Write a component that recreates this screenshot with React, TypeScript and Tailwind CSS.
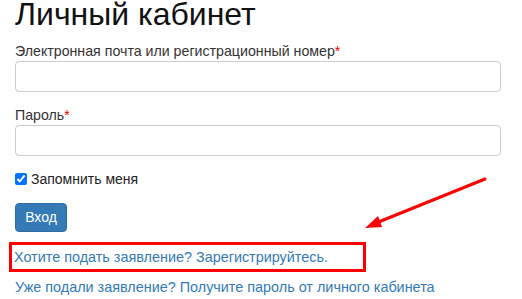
export default function App() {
  return (
    <div className="relative h-[299px] w-[522px] overflow-hidden bg-white px-[15px] font-['Liberation_Sans',Arial,sans-serif] text-[14px] text-[#333]">
      {/* Title */}
      <h1 className="h-[32px] text-[32px] leading-[29px] text-[#111]">Личный кабинет</h1>

      {/* Email */}
      <label className="mt-[9px] block text-[14.2px] leading-[20px]">
        Электронная почта или регистрационный номер<span className="text-[#e00]">*</span>
      </label>
      <input
        type="text"
        className="block h-[31px] w-[486px] rounded-[4px] border border-[#ccc] bg-white px-3 outline-none"
      />

      {/* Password */}
      <label className="mt-[13px] block text-[14.2px] leading-[20px]">
        Пароль<span className="text-[#e00]">*</span>
      </label>
      <input
        type="password"
        className="block h-[31px] w-[486px] rounded-[4px] border border-[#ccc] bg-white px-3 outline-none"
      />

      {/* Remember me */}
      <label className="mt-[13px] flex items-center gap-[4px] leading-[20px] text-[#222]">
        <input type="checkbox" defaultChecked className="m-0 h-[12px] w-[12px] accent-[#0075ff]" />
        Запомнить меня
      </label>

      {/* Submit */}
      <button className="mt-[14px] block h-[29px] w-[52px] rounded-[4px] border border-[#2e6da4] bg-[#337ab7] text-[14px] text-white">
        Вход
      </button>

      {/* Highlighted register link */}
      <div className="-ml-[6px] mt-[10px] h-[30px] w-[357px] border-[3px] border-[#ff0000] pl-[2px] pt-[2px]">
        <a href="#" className="text-[14.4px] leading-[20px] text-[#337ab7]">
          Хотите подать заявление? Зарегистрируйтесь.
        </a>
      </div>

      <div className="mt-[5px] leading-[20px]">
        <a href="#" className="text-[14.4px] text-[#337ab7]">
          Уже подали заявление? Получите пароль от личного кабинета
        </a>
      </div>

      {/* Annotation arrow */}
      <svg className="pointer-events-none absolute left-0 top-0" width="522" height="299" viewBox="0 0 522 299">
        <line x1="485" y1="179" x2="376" y2="223" stroke="#ff0000" strokeWidth="3" strokeLinecap="round" />
        <polygon points="365,228 378,216 382,227" fill="#ff0000" />
      </svg>
    </div>
  );
}
